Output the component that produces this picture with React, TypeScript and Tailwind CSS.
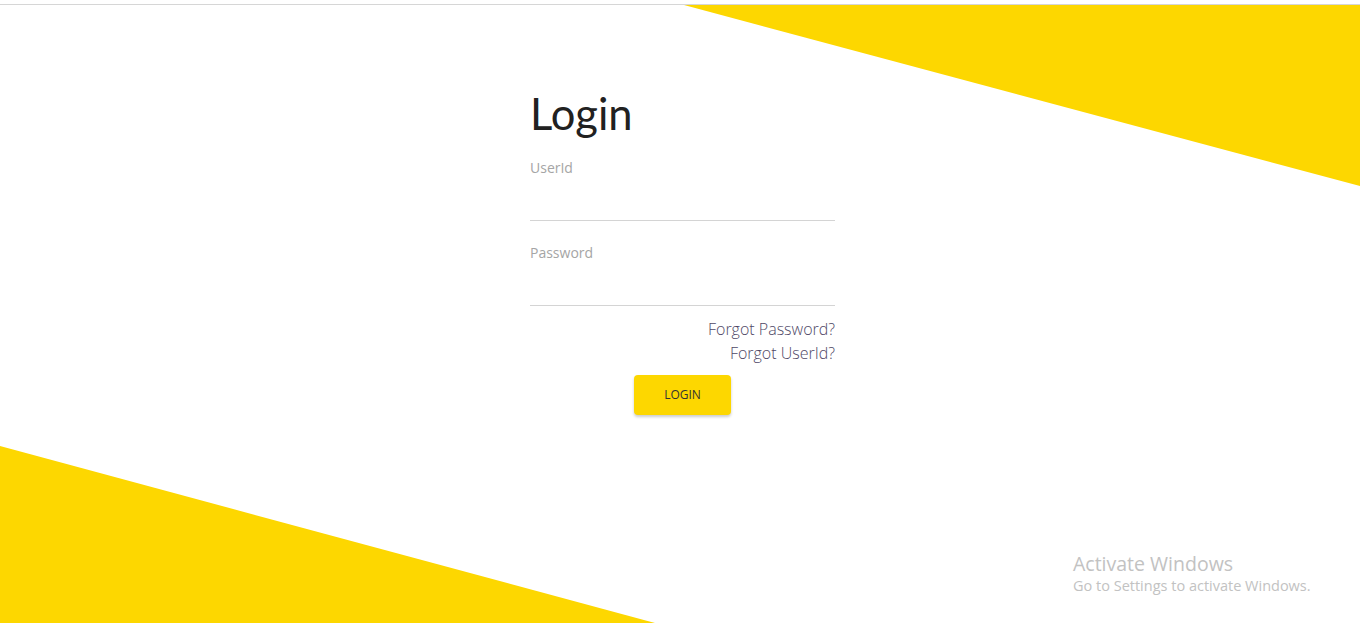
import React from "react";

export default function App() {
  return (
    <div className="relative h-[623px] w-full overflow-hidden bg-white pt-1" style={{ fontFamily: "'Open Sans', 'Noto Sans', sans-serif" }}>
      <div className="relative h-full border-t border-[#d6d6d6]">
        {/* decorative corner triangles */}
        <svg className="pointer-events-none absolute inset-0 h-full w-full" viewBox="0 0 1360 618" preserveAspectRatio="none">
          <polygon points="684,0 1360,0 1360,181" fill="#fdd700" />
          <polygon points="0,441 655,618 0,618" fill="#fdd700" />
        </svg>

        <div className="relative pl-[530px] pt-[86px]">
          <div className="flex w-[305px] flex-col">
            <h1 className="h-[45px] text-[43.5px] leading-[45px] text-[#212121]" style={{ fontFamily: "Lato, sans-serif" }}>
              Login
            </h1>

            <label className="mt-[22px] text-sm text-[#a5a5a5]">UserId</label>
            <input className="mt-[15px] h-[28px] border-b border-[#d4d4d4] outline-none" />

            <label className="mt-[22px] text-sm text-[#a5a5a5]">Password</label>
            <input type="password" className="mt-[15px] h-[28px] border-b border-[#d4d4d4] outline-none" />

            <div className="mt-[11px] flex flex-col items-end text-base font-light leading-6 text-[#4f4866]">
              <a href="#">Forgot Password?</a>
              <a href="#">Forgot UserId?</a>
            </div>

            <div className="mt-[10px] flex justify-center">
              <button className="h-10 w-[97px] rounded-sm bg-[#fdd700] text-xs text-[#333] shadow-[0_2px_3px_rgba(0,0,0,0.2)]">
                LOGIN
              </button>
            </div>
          </div>
        </div>

        <div className="absolute left-[1073px] top-[547px] text-[#c2c2c2]">
          <div className="text-[19.5px] leading-6">Activate Windows</div>
          <div className="text-[14.5px] leading-5">Go to Settings to activate Windows.</div>
        </div>
      </div>
    </div>
  );
}
